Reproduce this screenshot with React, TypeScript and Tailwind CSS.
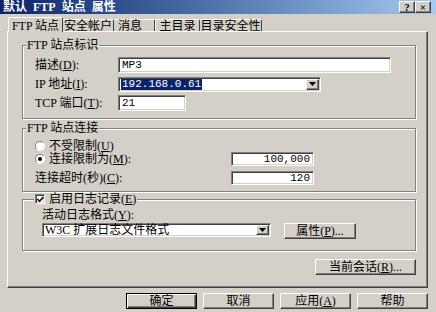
import React from 'react'

const font = "font-['Liberation_Serif','Noto_Sans_CJK_SC',serif]"
const mono = "font-['Liberation_Mono','Noto_Sans_CJK_SC',monospace] text-[11px]"
const sunken =
  'bg-white border border-t-[#808080] border-l-[#808080] border-b-white border-r-white shadow-[inset_1px_1px_0_#404040,inset_-1px_-1px_0_#d4d0c8]'
const raised =
  'bg-[#d4d0c8] border border-t-white border-l-white border-b-[#404040] border-r-[#404040] shadow-[inset_-1px_-1px_0_#808080]'
const etched =
  'border border-[#808080] shadow-[1px_1px_0_#fff,inset_1px_1px_0_#fff] p-0 m-0'

const Button = ({
  children,
  className = '',
  isDefault = false,
}: {
  children: React.ReactNode
  className?: string
  isDefault?: boolean
}) => (
  <div
    className={`flex items-center justify-center leading-[12px] whitespace-pre ${
      isDefault
        ? 'bg-[#d4d0c8] border border-black shadow-[inset_1px_1px_0_#fff,inset_-1px_-1px_0_#404040,inset_-2px_-2px_0_#808080]'
        : raised
    } ${className}`}
  >
    {children}
  </div>
)

const DropArrow = () => (
  <div
    className={`${raised} w-[13px] h-full flex items-center justify-center`}
  >
    <svg width="7" height="4" viewBox="0 0 7 4">
      <polygon points="0,0 7,0 3.5,4" fill="#000" />
    </svg>
  </div>
)

const Radio = ({ checked }: { checked?: boolean }) => (
  <div className="w-[10px] h-[10px] rounded-full bg-white border border-t-[#808080] border-l-[#808080] border-b-white border-r-white flex items-center justify-center shrink-0">
    {checked && <div className="w-[4px] h-[4px] rounded-full bg-black" />}
  </div>
)

const App = () => {
  return (
    <div
      className={`w-[436px] h-[312px] bg-[#d4d0c8] text-black text-[12px] leading-[12px] overflow-hidden ${font}`}
    >
      {/* title bar */}
      <div className="h-[14px] flex items-center pl-[3px] pr-[5px] bg-gradient-to-r from-[#0a246a] to-[#a6caf0]">
        <div className="flex gap-[6px] text-white font-bold">
          <span>默认</span>
          <span>FTP</span>
          <span>站点</span>
          <span>属性</span>
        </div>
        <div className="ml-auto flex">
          <div
            className={`${raised} w-[16px] h-[12px] flex items-center justify-center text-[11px] font-bold`}
          >
            ?
          </div>
          <div
            className={`${raised} w-[16px] h-[12px] flex items-center justify-center text-[11px] font-bold`}
          >
            ×
          </div>
        </div>
      </div>

      <div className="pl-[7px]">
        {/* tabs */}
        <div className="mt-[3px] h-[14px] flex items-end whitespace-pre">
          <div className="relative z-10 ml-[1px] w-[55px] h-[15px] -mb-[1px] pt-[1px] bg-[#d4d0c8] border-t border-l border-t-white border-l-white border-r border-r-[#404040] rounded-t-[2px] flex items-center justify-center">
            FTP 站点
          </div>
          <div className="w-[51px] h-[12px] pt-[1px] border-t border-t-white border-r border-r-[#404040] rounded-t-[2px] flex items-center justify-center">
            安全帐户
          </div>
          <div className="w-[41px] h-[12px] pt-[1px] border-t border-t-white border-r border-r-[#404040] rounded-t-[2px] flex items-center pl-[4px]">
            消息
          </div>
          <div className="w-[45px] h-[12px] pt-[1px] border-t border-l border-t-white border-l-white border-r border-r-[#404040] rounded-t-[2px] flex items-center justify-center">
            主目录
          </div>
          <div className="w-[62px] h-[12px] pt-[1px] border-t border-t-white border-r border-r-[#404040] rounded-t-[2px] flex items-center justify-center">
            目录安全性
          </div>
        </div>

        {/* panel */}
        <div className="w-[421px] h-[257px] border border-t-white border-l-white border-r-[#404040] border-b-[#404040] shadow-[inset_-1px_-1px_0_#808080] flex flex-col">
          {/* group 1 */}
          <fieldset className={`${etched} ml-[14px] mt-[7px] w-[394px]`}>
            <legend className="ml-[3px] px-[1px] bg-[#d4d0c8] h-[12px] leading-[12px] whitespace-pre">
              FTP 站点标识
            </legend>
            <div className="pl-[12px] pt-[6px] pb-[7px] flex flex-col gap-[3px]">
              <div className="h-[16px] flex items-center">
                <span className="w-[83px] whitespace-pre">
                  描述(<u>D</u>):
                </span>
                <div
                  className={`${sunken} ${mono} w-[273px] h-[16px] flex items-center pl-[3px]`}
                >
                  MP3
                </div>
              </div>
              <div className="h-[16px] flex items-center">
                <span className="w-[83px] whitespace-pre">
                  IP 地址(<u>I</u>):
                </span>
                <div
                  className={`${sunken} ${mono} w-[203px] h-[15px] flex items-center pl-[2px] pr-[1px] py-[1px]`}
                >
                  <span className="bg-[#0a246a] text-white px-[1px] leading-[11px]">
                    192.168.0.61
                  </span>
                  <div className="ml-auto h-full">
                    <DropArrow />
                  </div>
                </div>
              </div>
              <div className="h-[16px] flex items-center">
                <span className="w-[83px] whitespace-pre">
                  TCP 端口(<u>T</u>):
                </span>
                <div
                  className={`${sunken} ${mono} w-[68px] h-[16px] flex items-center pl-[3px]`}
                >
                  21
                </div>
              </div>
            </div>
          </fieldset>

          {/* group 2 */}
          <fieldset className={`${etched} ml-[14px] mt-[3px] w-[394px]`}>
            <legend className="ml-[3px] px-[1px] bg-[#d4d0c8] h-[12px] leading-[12px] whitespace-pre">
              FTP 站点连接
            </legend>
            <div className="pl-[12px] pt-[6px] pb-[6px] flex flex-col">
              <div className="h-[12px] flex items-center gap-[4px]">
                <Radio />
                <span>
                  不受限制(<u>U</u>)
                </span>
              </div>
              <div className="h-[14px] flex items-center">
                <div className="w-[196px] flex items-center gap-[4px]">
                  <Radio checked />
                  <span>
                    连接限制为(<u>M</u>):
                  </span>
                </div>
                <div
                  className={`${sunken} ${mono} w-[83px] h-[14px] flex items-center justify-end pr-[3px]`}
                >
                  100,000
                </div>
              </div>
              <div className="mt-[5px] h-[14px] flex items-center">
                <span className="w-[196px]">
                  连接超时(秒)(<u>C</u>):
                </span>
                <div
                  className={`${sunken} ${mono} w-[83px] h-[14px] flex items-center justify-end pr-[3px]`}
                >
                  120
                </div>
              </div>
            </div>
          </fieldset>

          {/* group 3 */}
          <fieldset className={`${etched} ml-[14px] mt-[1px] w-[394px]`}>
            <legend className="ml-[11px] px-[1px] bg-[#d4d0c8] h-[12px] flex items-center gap-[4px]">
              <div
                className={`${sunken} w-[10px] h-[10px] flex items-center justify-center`}
              >
                <svg width="7" height="7" viewBox="0 0 7 7">
                  <path
                    d="M0.5 3 L2.5 5.2 L6.5 1"
                    stroke="#000"
                    strokeWidth="1.6"
                    fill="none"
                  />
                </svg>
              </div>
              <span>
                启用日志记录(<u>E</u>)
              </span>
            </legend>
            <div className="pl-[19px] pt-[4px] pb-[11px] flex flex-col">
              <div className="h-[12px]">
                活动日志格式(<u>Y</u>):
              </div>
              <div className="mt-[2px] flex items-start">
                <div
                  className={`${sunken} w-[229px] h-[14px] flex items-center pl-[2px] pr-[1px] py-[1px]`}
                >
                  <span className="whitespace-pre">W3C 扩展日志文件格式</span>
                  <div className="ml-auto h-full">
                    <DropArrow />
                  </div>
                </div>
                <Button className="ml-[13px] w-[72px] h-[16px]">
                  属性(<u>P</u>)...
                </Button>
              </div>
            </div>
          </fieldset>

          <Button className="self-end mr-[11px] mt-[8px] w-[101px] h-[16px]">
            当前会话(<u>R</u>)...
          </Button>
        </div>

        {/* bottom buttons */}
        <div className="w-[421px] mt-[5px] flex justify-end gap-[6px]">
          <Button isDefault className="w-[71px] h-[16px]">
            确定
          </Button>
          <Button className="w-[71px] h-[16px]">取消</Button>
          <Button className="w-[71px] h-[16px]">
            应用(<u>A</u>)
          </Button>
          <Button className="w-[71px] h-[16px]">帮助</Button>
        </div>
      </div>
    </div>
  )
}

export default App
